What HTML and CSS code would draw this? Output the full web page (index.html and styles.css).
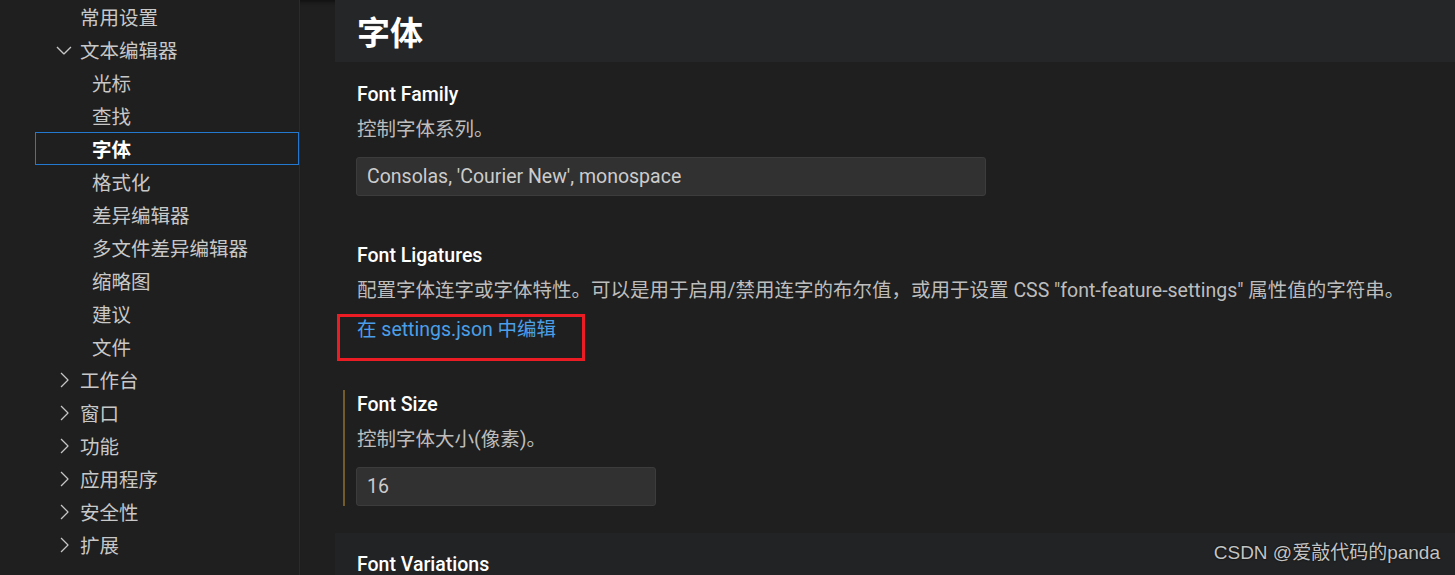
FILE: index.html
```html
<!DOCTYPE html>
<html lang="zh">
<head>
<meta charset="utf-8">
<title>设置 - 字体</title>
<link rel="stylesheet" href="styles.css">
</head>
<body>
<div class="app">
  <nav class="toc">
    <div class="row l0"><span class="label">常用设置</span></div>
    <div class="row l0 tw"><svg class="chev" viewBox="0 0 16 16"><path d="M7.976 10.072l4.357-4.357.62.618L8.284 11h-.618L3 6.333l.619-.618 4.357 4.357z"/></svg><span class="label">文本编辑器</span></div>
    <div class="row l1"><span class="label">光标</span></div>
    <div class="row l1"><span class="label">查找</span></div>
    <div class="row l1 selected"><span class="label">字体</span></div>
    <div class="row l1"><span class="label">格式化</span></div>
    <div class="row l1"><span class="label">差异编辑器</span></div>
    <div class="row l1"><span class="label">多文件差异编辑器</span></div>
    <div class="row l1"><span class="label">缩略图</span></div>
    <div class="row l1"><span class="label">建议</span></div>
    <div class="row l1"><span class="label">文件</span></div>
    <div class="row l0 tw"><svg class="chev" viewBox="0 0 16 16"><path d="M10.072 8.024L5.715 3.667l.618-.62L11 7.716v.618L6.333 13l-.618-.619 4.357-4.357z"/></svg><span class="label">工作台</span></div>
    <div class="row l0 tw"><svg class="chev" viewBox="0 0 16 16"><path d="M10.072 8.024L5.715 3.667l.618-.62L11 7.716v.618L6.333 13l-.618-.619 4.357-4.357z"/></svg><span class="label">窗口</span></div>
    <div class="row l0 tw"><svg class="chev" viewBox="0 0 16 16"><path d="M10.072 8.024L5.715 3.667l.618-.62L11 7.716v.618L6.333 13l-.618-.619 4.357-4.357z"/></svg><span class="label">功能</span></div>
    <div class="row l0 tw"><svg class="chev" viewBox="0 0 16 16"><path d="M10.072 8.024L5.715 3.667l.618-.62L11 7.716v.618L6.333 13l-.618-.619 4.357-4.357z"/></svg><span class="label">应用程序</span></div>
    <div class="row l0 tw"><svg class="chev" viewBox="0 0 16 16"><path d="M10.072 8.024L5.715 3.667l.618-.62L11 7.716v.618L6.333 13l-.618-.619 4.357-4.357z"/></svg><span class="label">安全性</span></div>
    <div class="row l0 tw"><svg class="chev" viewBox="0 0 16 16"><path d="M10.072 8.024L5.715 3.667l.618-.62L11 7.716v.618L6.333 13l-.618-.619 4.357-4.357z"/></svg><span class="label">扩展</span></div>
  </nav>
  <main class="editor">
    <section class="group-head"><h2 class="group-title">字体</h2></section>
    <div class="item">
      <div class="item-inner">
        <div class="title">Font Family</div>
        <div class="desc">控制字体系列。</div>
        <div class="input wide">Consolas, 'Courier New', monospace</div>
      </div>
    </div>
    <div class="item">
      <div class="item-inner">
        <div class="title">Font Ligatures</div>
        <div class="desc">配置字体连字或字体特性。可以是用于启用/禁用连字的布尔值，或用于设置 CSS "font-feature-settings" 属性值的字符串。</div>
        <div class="link-row"><span class="link">在 settings.json 中编辑</span><span class="annot"></span></div>
      </div>
    </div>
    <div class="item">
      <div class="item-inner modified">
        <div class="title">Font Size</div>
        <div class="desc">控制字体大小(像素)。</div>
        <div class="input narrow">16</div>
      </div>
    </div>
    <section class="group-next">
      <div class="item">
        <div class="item-inner">
          <div class="title">Font Variations</div>
        </div>
      </div>
    </section>
  </main>
  <div class="watermark">CSDN @爱敲代码的panda</div>
</div>
</body>
</html>
```
FILE: styles.css
```css
html, body {
  margin: 0;
  padding: 0;
  background: #1f1f1f;
  overflow: hidden;
}
body {
  width: 1455px;
  height: 575px;
  font-family: "Roboto", "Noto Sans CJK SC", sans-serif;
  color: #cccccc;
}
.app {
  position: relative;
  display: flex;
  height: 575px;
  overflow: hidden;
}
.toc {
  width: 299px;
  flex: none;
  border-right: 1px solid #2b2b2b;
  display: flex;
  flex-direction: column;
  font-family: "Noto Sans CJK SC", sans-serif;
}
.row {
  box-sizing: border-box;
  height: 33px;
  flex: none;
  margin-left: 35px;
  width: 264px;
  display: flex;
  align-items: center;
  font-size: 19.5px;
  color: #c8c8c8;
  border: 1px solid transparent;
  white-space: nowrap;
}
.row.l0 { padding-left: 44px; }
.row.l0.tw { padding-left: 16px; }
.row.l1 { padding-left: 56px; }
.chev {
  width: 24px;
  height: 24px;
  margin-right: 4px;
  fill: #c5c5c5;
  flex: none;
}
.row.selected {
  border-color: #2379d0;
  color: #ffffff;
  font-weight: 700;
}
.editor {
  flex: 1;
  padding-left: 35px;
  display: flex;
  flex-direction: column;
  box-shadow: inset 0 6px 5px -5px #0b0b0b;
}
.group-head {
  flex: none;
  height: 62px;
  background: #252628;
  display: flex;
  align-items: center;
  padding-left: 22px;
}
.group-title {
  margin: 0;
  font-family: "Noto Sans CJK SC", sans-serif;
  font-size: 33px;
  font-weight: 700;
  color: #ffffff;
  line-height: 40px;
}
.item {
  flex: none;
  padding: 18px 0 27px 22px;
}
.item-inner {
  margin-left: -14px;
  padding-left: 12px;
  border-left: 2px solid transparent;
}
.item-inner.modified {
  border-left-color: #735a2a;
}
.title {
  font-size: 19.5px;
  font-weight: 500;
  line-height: 30px;
  color: #ffffff;
}
.desc {
  margin-top: 5px;
  font-size: 19.5px;
  line-height: 30px;
  color: #bdbdbd;
  white-space: nowrap;
}
.input {
  box-sizing: border-box;
  margin-top: 12px;
  margin-left: -1px;
  height: 39px;
  line-height: 37px;
  background: #313131;
  border: 1px solid #3c3c3c;
  border-radius: 3px;
  padding-left: 10px;
  font-size: 19.5px;
  color: #cccccc;
}
.input.wide { width: 630px; }
.input.narrow { width: 300px; }
.link-row {
  position: relative;
  margin-top: 9px;
  line-height: 30px;
  font-size: 19.5px;
}
.link {
  color: #4a9fe8;
}
.annot {
  position: absolute;
  left: -20px;
  top: -1px;
  width: 248px;
  height: 47px;
  box-sizing: border-box;
  border: 3px solid #ec1c24;
}
.group-next {
  background: #222324;
  flex: 1;
}
.group-next .item {
  padding-top: 17px;
}
.watermark {
  position: absolute;
  right: 15px;
  bottom: 10px;
  font-family: "Liberation Sans", "Noto Sans CJK SC", sans-serif;
  font-size: 19px;
  line-height: 24px;
  color: #c4c4c4;
  text-shadow: 0 0 2px #000;
}
```
